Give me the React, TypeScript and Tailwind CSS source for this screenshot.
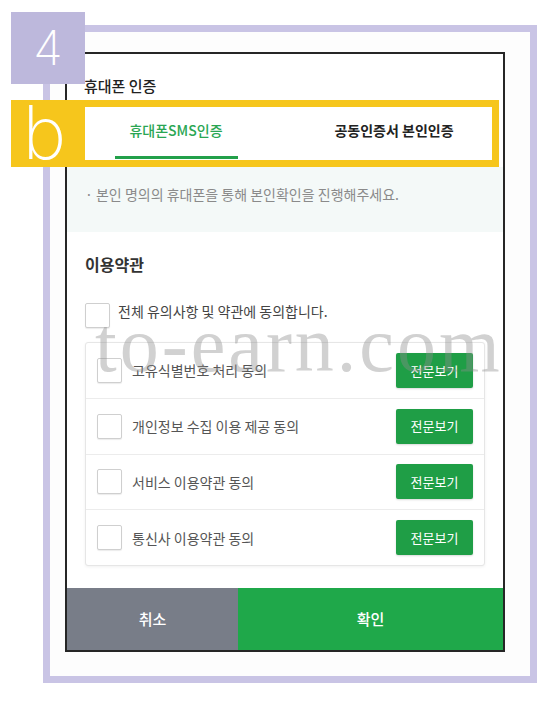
import React from "react";

const rows = [
  "고유식별번호 처리 동의",
  "개인정보 수집 이용 제공 동의",
  "서비스 이용약관 동의",
  "통신사 이용약관 동의",
];

function Box() {
  return (
    <div className="w-[25px] h-[25px] shrink-0 rounded-[2px] border border-[#cfcfcf] bg-white shadow-[0_1px_1px_rgba(0,0,0,0.08)]" />
  );
}

export default function App() {
  return (
    <div
      className="relative w-[557px] h-[702px] overflow-hidden bg-white pl-[43px] pt-[25px]"
      style={{ fontFamily: '"Noto Sans CJK KR", "Noto Sans", sans-serif' }}
    >
      {/* lavender frame */}
      <div className="w-[494px] h-[658px] border-[7px] border-[#c9c4e5] bg-[#fdfdfd] pl-[15px] pt-[20px]">
        {/* card */}
        <div className="w-[440px] h-[600px] border-2 border-[#262626] bg-white flex flex-col">
          <div className="pl-[17px] pt-[21px] text-[15px] leading-[22px] font-medium text-[#222]">
            휴대폰 인증
          </div>
          {/* tabs */}
          <div className="mt-[3px] grid grid-cols-2 h-[67px]">
            <div className="flex flex-col items-center pt-[20px]">
              <span className="text-[14px] leading-[20px] font-medium text-[#2aa653]">휴대폰SMS인증</span>
              <div className="mt-[16px] h-[3px] w-[123px] bg-[#22a04a]" />
            </div>
            <div className="flex flex-col items-center pt-[20px]">
              <span className="text-[14px] leading-[20px] font-bold text-[#222]">공동인증서 본인인증</span>
            </div>
          </div>
          {/* info band */}
          <div className="h-[65px] bg-[#f4f9f8] pl-[18px] pt-[17px] text-[14px] leading-[20px] text-[#8a8a8a]">
            · 본인 명의의 휴대폰을 통해 본인확인을 진행해주세요.
          </div>
          <div className="px-[18px]">
            <div className="mt-[20px] text-[16px] leading-[24px] font-bold text-[#333]">이용약관</div>
            <div className="mt-[27px] flex items-start gap-[8px]">
              <Box />
              <span className="-mt-[2px] text-[14px] leading-[20px] text-[#444]">
                전체 유의사항 및 약관에 동의합니다.
              </span>
            </div>
            <div className="mt-[14px] h-[224px] rounded-[3px] border border-[#e6e6e6] bg-white shadow-[0_1px_3px_rgba(0,0,0,0.06)] flex flex-col">
              {rows.map((r, i) => (
                <div
                  key={r}
                  className={
                    "flex-1 flex items-center pl-[11px] pr-[11px] " +
                    (i < rows.length - 1 ? "border-b border-[#ececec]" : "")
                  }
                >
                  <Box />
                  <span className="ml-[10px] text-[14px] leading-[20px] text-[#555]">{r}</span>
                  <button className="ml-auto w-[77px] h-[35px] rounded-[2px] bg-[#1f9e46] text-white text-[13px] shadow-[0_1px_2px_rgba(0,0,0,0.15)]">
                    전문보기
                  </button>
                </div>
              ))}
            </div>
          </div>
          <div className="flex-1" />
          <div className="flex h-[62px]">
            <button className="w-[171px] h-full bg-[#787d88] text-white text-[15px] font-medium">취소</button>
            <button className="flex-1 h-full bg-[#1fa84a] text-white text-[15px] font-medium">확인</button>
          </div>
        </div>
      </div>

      {/* annotation badges */}
      <div
        className="absolute left-[11px] top-[12px] w-[74px] h-[72px] bg-[#bdb8dc] flex items-center justify-center text-white text-[48px] font-extralight"
        style={{ fontFamily: 'Inter, "Liberation Sans", sans-serif' }}
      >
        4
      </div>
      <div className="absolute left-[78px] top-[100px] w-[421px] h-[67px] border-[7px] border-[#f6c61c]" />
      <div
        className="absolute left-[11px] top-[100px] w-[67px] h-[67px] bg-[#f6c61c] flex items-center justify-center text-white text-[74px] leading-none font-extralight pb-[4px]"
        style={{ fontFamily: 'Inter, "Liberation Sans", sans-serif' }}
      >
        b
      </div>

      {/* watermark */}
      <div
        className="pointer-events-none absolute left-[95px] top-[306px] text-[78px] leading-none tracking-[3px] text-[#8c8c8c]/40 whitespace-nowrap"
        style={{ fontFamily: '"Liberation Serif", serif' }}
      >
        to-earn.com
      </div>
    </div>
  );
}
